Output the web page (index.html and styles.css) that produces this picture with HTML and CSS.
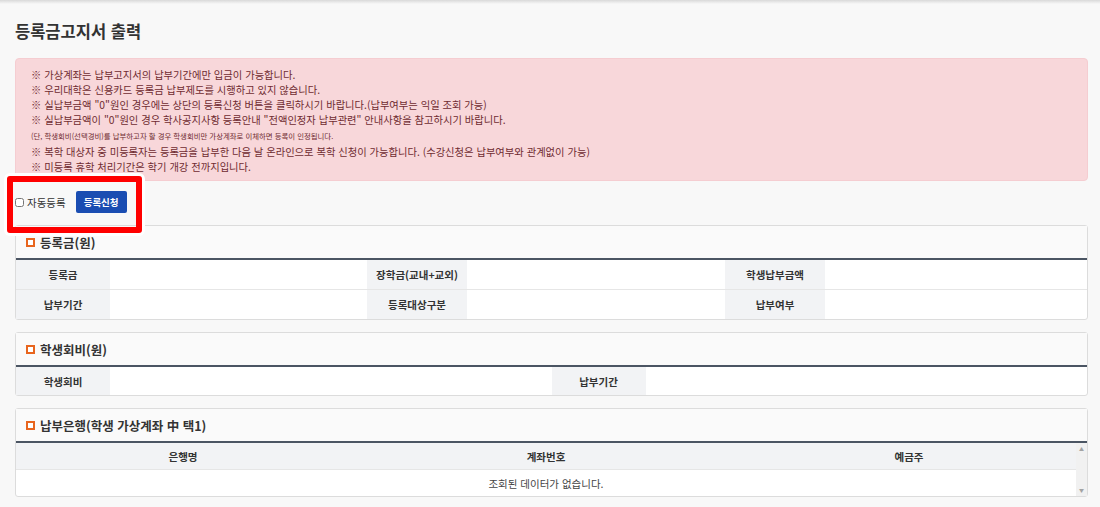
FILE: index.html
```html
<!DOCTYPE html>
<html lang="ko">
<head>
    <meta charset="UTF-8">
    <meta name="viewport" content="width=device-width, initial-scale=1.0">
    <title>등록금고지서 출력</title>
    <link rel="stylesheet" href="styles.css">
</head>
<body>
    <div class="top-shadow"></div>

    <div class="page">
        <h2 class="page-title">등록금고지서 출력</h2>

        <div class="notice">
            <p>※ 가상계좌는 납부고지서의 납부기간에만 입금이 가능합니다.</p>
            <p>※ 우리대학은 신용카드 등록금 납부제도를 시행하고 있지 않습니다.</p>
            <p>※ 실납부금액 "0"원인 경우에는 상단의 등록신청 버튼을 클릭하시기 바랍니다.(납부여부는 익일 조회 가능)</p>
            <p>※ 실납부금액이 "0"원인 경우 학사공지사항 등록안내 "전액인정자 납부관련" 안내사항을 참고하시기 바랍니다.</p>
            <p class="small">(단, 학생회비(선택경비)를 납부하고자 할 경우 학생회비만 가상계좌로 이체하면 등록이 인정됩니다.</p>
            <p>※ 복학 대상자 중 미등록자는 등록금을 납부한 다음 날 온라인으로 복학 신청이 가능합니다. (수강신청은 납부여부와 관계없이 가능)</p>
            <p>※ 미등록 휴학 처리기간은 학기 개강 전까지입니다.</p>
        </div>

        <div class="action-row">
            <label class="auto-check"><input type="checkbox"> 자동등록</label>
            <button class="btn-apply">등록신청</button>
            <div class="highlight"></div>
        </div>

        <div class="panel">
            <div class="panel-head"><span class="mark"></span>등록금(원)</div>
            <div class="info-grid cols-3">
                <div class="lbl">등록금</div><div class="val"></div>
                <div class="lbl">장학금(교내+교외)</div><div class="val"></div>
                <div class="lbl">학생납부금액</div><div class="val"></div>
                <div class="lbl">납부기간</div><div class="val"></div>
                <div class="lbl">등록대상구분</div><div class="val"></div>
                <div class="lbl">납부여부</div><div class="val"></div>
            </div>
        </div>

        <div class="panel">
            <div class="panel-head"><span class="mark"></span>학생회비(원)</div>
            <div class="info-grid cols-2">
                <div class="lbl">학생회비</div><div class="val"></div>
                <div class="lbl">납부기간</div><div class="val"></div>
            </div>
        </div>

        <div class="panel">
            <div class="panel-head"><span class="mark"></span>납부은행(학생 가상계좌 中 택1)</div>
            <div class="bank-wrap">
                <div class="bank-table">
                    <div class="bank-row bank-head">
                        <div>은행명</div>
                        <div>계좌번호</div>
                        <div>예금주</div>
                    </div>
                    <div class="bank-empty">조회된 데이터가 없습니다.</div>
                </div>
                <div class="fake-scroll">
                    <span class="arrow">&#9650;</span>
                    <span class="arrow">&#9660;</span>
                </div>
            </div>
        </div>
    </div>
</body>
</html>
```

FILE: styles.css
```css
body {
    margin: 0;
    background-color: #f8f8f8;
    font-family: "Noto Sans CJK KR", "Noto Sans", sans-serif;
    color: #333;
}
.top-shadow {
    height: 4px;
    background: linear-gradient(#d9d9d9, #f8f8f8);
}
.page {
    padding: 0 12px 0 15px;
}
.page-title {
    margin: 14px 0 0;
    font-size: 16.5px;
    font-weight: bold;
    line-height: 26px;
    color: #333;
}
.notice {
    margin-top: 14px;
    padding: 8px 14px 6px 15px;
    background: #f8d7da;
    border: 1px solid #f5cdd1;
    border-radius: 4px;
    color: #6f2b31;
}
.notice p {
    margin: 0;
    font-size: 10.3px;
    line-height: 15px;
}
.notice .small {
    font-size: 7.4px;
    line-height: 17px;
}
.action-row {
    position: relative;
    display: flex;
    align-items: center;
    gap: 10px;
    margin-top: 10px;
    height: 22px;
}
.auto-check {
    display: flex;
    align-items: center;
    gap: 3px;
    font-size: 10.5px;
    color: #333;
}
.auto-check input {
    width: 9px;
    height: 9px;
    margin: 0;
}
.btn-apply {
    height: 22px;
    padding: 0 8px;
    border: none;
    border-radius: 2px;
    background: #1a4db2;
    color: #fff;
    font-family: inherit;
    font-size: 9.5px;
    font-weight: bold;
}
.highlight {
    position: absolute;
    left: -8px;
    top: -15px;
    width: 123px;
    height: 45px;
    border: 6px solid #f00;
    border-radius: 3px;
    box-shadow: 0 0 0 3px #fff;
    pointer-events: none;
}
.panel {
    margin-top: 12px;
    background: #fff;
    border: 1px solid #dcdcdc;
    border-radius: 3px;
}
.panel-head {
    display: flex;
    align-items: center;
    gap: 5px;
    height: 32px;
    padding-left: 10px;
    background: #fafafa;
    border-bottom: 2px solid #4b5563;
    font-size: 12.5px;
    font-weight: bold;
    color: #333;
}
.mark {
    width: 5px;
    height: 5px;
    border: 2px solid #e8651e;
    background: #fff;
}
.info-grid {
    display: grid;
}
.cols-3 {
    grid-template-columns: 94px 257px 100px 258px 100px 1fr;
}
.cols-2 {
    grid-template-columns: 94px 1fr 94px 1fr;
}
.info-grid > div {
    height: 29px;
    border-bottom: 1px solid #e6e6e6;
    display: flex;
    align-items: center;
    justify-content: center;
    font-size: 10.5px;
}
.info-grid > div:nth-last-child(-n+6) {
    border-bottom: none;
}
.cols-2 > div:nth-last-child(-n+4) {
    border-bottom: none;
}
.cols-2 > div {
    height: 28px;
}
.lbl {
    background: #f2f3f5;
    font-weight: bold;
}
.bank-wrap {
    display: flex;
}
.bank-table {
    flex: 1;
}
.bank-row {
    display: grid;
    grid-template-columns: 334px 392px 1fr;
}
.bank-head {
    height: 26px;
    background: #f2f3f5;
    border-bottom: 1px solid #e6e6e6;
}
.bank-row > div {
    display: flex;
    align-items: center;
    justify-content: center;
    font-size: 10.5px;
    font-weight: bold;
}
.bank-empty {
    height: 26px;
    display: flex;
    align-items: center;
    justify-content: center;
    font-size: 10.5px;
    color: #444;
}
.fake-scroll {
    width: 11px;
    background: #f1f1f1;
    display: flex;
    flex-direction: column;
    justify-content: space-between;
    align-items: center;
    padding: 3px 0;
}
.arrow {
    font-size: 5px;
    color: #a3a3a3;
    line-height: 6px;
}
```
